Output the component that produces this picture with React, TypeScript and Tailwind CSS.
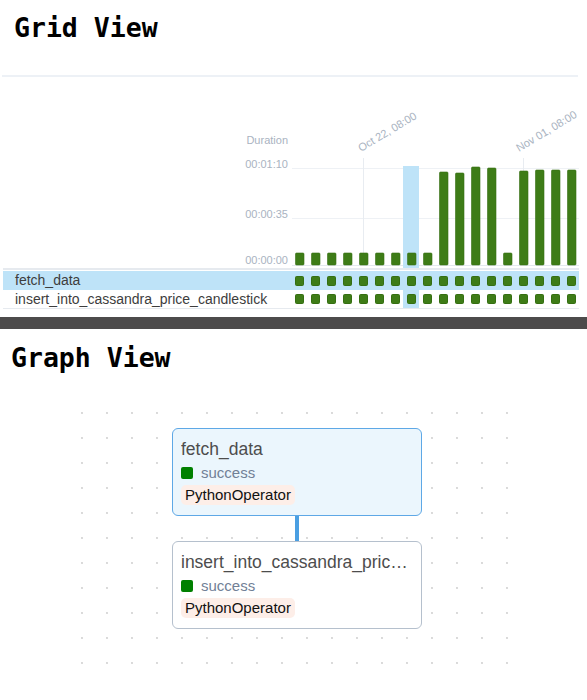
import React from "react";

const barHeights = [12, 12, 12, 12, 12, 12, 12, 12, 12, 93, 92, 98, 97, 12, 94, 95, 95, 95];
const HL = 7;

function Chart() {
  const top = 77;
  return (
    <svg width={587} height={191} className="block">
      <text x={288} y={144 - top} textAnchor="end" fontSize={11} fill="#a9b3c1" fontFamily="Liberation Sans, Arial, sans-serif">Duration</text>
      {[
        ["00:01:10", 167.5],
        ["00:00:35", 217.5],
        ["00:00:00", 264],
      ].map(([t, y]) => (
        <text key={t as string} x={288} y={(y as number) - top} textAnchor="end" fontSize={11} fill="#a9b3c1" fontFamily="Liberation Sans, Arial, sans-serif">{t}</text>
      ))}
      {[168.5, 218.5].map((y) => (
        <line key={y} x1={292} x2={579} y1={y - top} y2={y - top} stroke="#eef1f5" strokeWidth={1} />
      ))}
      <line x1={292} x2={579} y1={265.5 - top} y2={265.5 - top} stroke="#e3e8ee" strokeWidth={1} />
      {[363.5, 523.5].map((x) => (
        <line key={x} x1={x} x2={x} y1={158 - top} y2={265 - top} stroke="#e8ecf1" strokeWidth={1} />
      ))}
      <text x={361} y={152 - top} fontSize={11} fill="#a9b3c1" fontFamily="Liberation Sans, Arial, sans-serif" transform={`rotate(-31 361 ${152 - top})`}>Oct 22, 08:00</text>
      <text x={519} y={152 - top} fontSize={11} fill="#a9b3c1" fontFamily="Liberation Sans, Arial, sans-serif" transform={`rotate(-31 519 ${152 - top})`}>Nov 01, 08:00</text>
      <rect x={403} y={166 - top} width={16} height={191 - (166 - top)} fill="#bee3f8" />
      {barHeights.map((h, i) => (
        <rect key={i} x={295.5 + 16 * i} y={265 - top - h} width={8.5} height={h} rx={1} fill="#3e7c17" stroke="#356f12" strokeWidth={0.6} />
      ))}
    </svg>
  );
}

function Squares({ highlight }: { highlight: boolean }) {
  return (
    <div className="flex h-full">
      {barHeights.map((_, i) => (
        <div key={i} className={`w-[16px] h-full flex items-center justify-center ${highlight && i === HL ? "bg-[#bee3f8]" : ""}`}>
          <div className="w-[9px] h-[10px] rounded-[1.5px] bg-[#3e7c17] border-[0.5px] border-[#356f12]" />
        </div>
      ))}
    </div>
  );
}

function Node({ title, selected, className }: { title: string; selected?: boolean; className: string }) {
  return (
    <div
      className={`absolute w-[250px] h-[88px] rounded-[6px] border px-[8px] pt-[8px] ${
        selected ? "bg-[#ebf6fd] border-[#5ea8e6]" : "bg-white border-[#b5c0cd]"
      } ${className}`}
    >
      <div className="h-[24px] leading-[24px] text-[17.5px] text-[#4d4d4d] truncate">{title}</div>
      <div className="mt-[2px] h-[20px] flex items-center">
        <div className="w-[12px] h-[12px] rounded-[2px] bg-[#008000]" />
        <span className="ml-[8px] text-[15px] leading-[20px] text-[#718096]">success</span>
      </div>
      <div className="mt-[1px] inline-flex h-[20px] items-center rounded-[5px] bg-[#fdeee8] px-[4px] text-[15px] leading-[20px] text-[#111]">
        PythonOperator
      </div>
    </div>
  );
}

export default function App() {
  return (
    <div className="w-[587px] h-[700px] bg-white overflow-hidden font-['Liberation_Sans',Arial,sans-serif]">
      <section className="pt-[12px]">
        <h1 className="pl-[14px] h-[32px] leading-[32px] text-[26.5px] font-bold text-black font-['DejaVu_Sans_Mono',monospace]">
          Grid View
        </h1>
        <div className="mt-[31px] ml-[2px] w-[576px] h-[2px] bg-[#edf1f6]" />
        <Chart />
        <div className="ml-[3px] w-[576px]">
          <div className="h-[2px] bg-[#e6eaef]" />
          <div className="mt-[1px] h-[19px] flex bg-[#bee3f8]">
            <div className="w-[288px] pl-[12px] text-[14px] leading-[19px] text-[#3d3d3d]">fetch_data</div>
            <Squares highlight={false} />
          </div>
          <div className="h-[19px] flex border-b border-[#e6eaef]">
            <div className="w-[288px] pl-[12px] text-[14px] leading-[18px] text-[#3d3d3d] whitespace-nowrap">
              insert_into_cassandra_price_candlestick
            </div>
            <Squares highlight={true} />
          </div>
        </div>
      </section>
      <div className="mt-[8px] h-[12px] bg-[#4d4b4b]" />
      <section className="pt-[13px]">
        <h1 className="pl-[11px] h-[32px] leading-[32px] text-[26.5px] font-bold text-black font-['DejaVu_Sans_Mono',monospace]">
          Graph View
        </h1>
        <div className="relative mt-[26px] ml-[70px] w-[450px] h-[275px]">
          <svg width={450} height={275} className="absolute inset-0">
            <defs>
              <pattern id="dots" width={25} height={25} patternUnits="userSpaceOnUse">
                <circle cx={12} cy={13} r={0.9} fill="#c9c9c9" />
              </pattern>
            </defs>
            <rect width={450} height={275} fill="url(#dots)" />
          </svg>
          <Node title="fetch_data" selected className="left-[102px] top-[28px]" />
          <div className="absolute left-[225px] top-[116px] w-[4px] h-[25px] bg-[#4a9fe2]" />
          <Node title="insert_into_cassandra_price_candlestick" className="left-[102px] top-[141px]" />
        </div>
      </section>
    </div>
  );
}
